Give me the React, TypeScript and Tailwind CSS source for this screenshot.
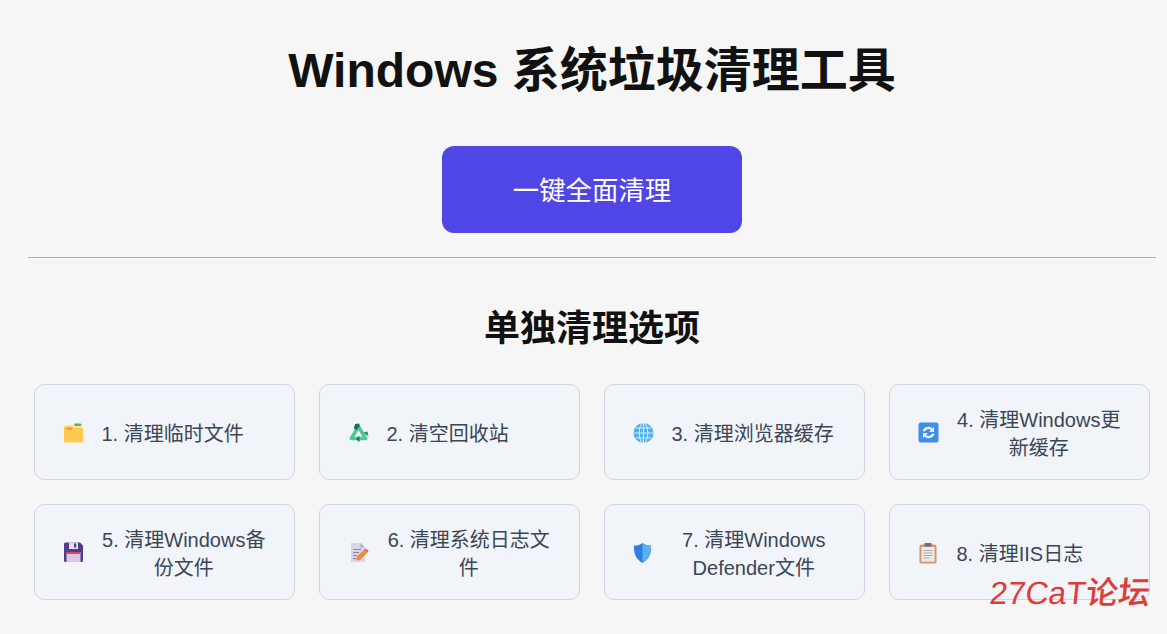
import React from 'react';

const FolderIcon = () => (
  <svg width="22" height="22" viewBox="0 0 22 22">
    <path d="M2 4 A2 2 0 0 1 4 2 H18 A2 2 0 0 1 20 4 V8 H2 Z" fill="#f5e9b8" />
    <rect x="12" y="1" width="7" height="2.6" rx="0.8" fill="#5fae5a" />
    <path d="M1 5 A1 1 0 0 1 2 4 H10 L11.5 5.5 H20 A1 1 0 0 1 21 6.5 V19 A2 2 0 0 1 19 21 H3 A2 2 0 0 1 1 19 Z" fill="#fdc94e" />
    <rect x="3.5" y="5.5" width="6" height="1.8" rx="0.5" fill="#ef8a4a" />
  </svg>
);

const RecycleIcon = () => (
  <svg width="22" height="22" viewBox="0 0 22 22">
    <path d="M11 4.5 L18.6 16.8 H3.4 Z" fill="none" stroke="#4cc997" strokeWidth="3.8" strokeLinejoin="round" />
    <path d="M7.5 1.5 L11.5 1 L12.5 3.5 L9 8 L6 6 Z" fill="#1f6f58" />
    <path d="M12 14 V20.6 L8.6 17.3 Z" fill="#1f6f58" />
    <path d="M16 10.5 L20.5 9.5 L21.4 14.5 Z" fill="#2a8f6e" />
  </svg>
);

const GlobeIcon = () => (
  <svg width="22" height="22" viewBox="0 0 22 22">
    <circle cx="11" cy="11" r="10.5" fill="#4fb0ea" />
    <g fill="none" stroke="#d3ecfa" strokeWidth="1.1">
      <ellipse cx="11" cy="11" rx="4.5" ry="10.5" />
      <path d="M11 1 V21 M1 11 H21 M3 5.8 H19 M3 16.2 H19" />
    </g>
  </svg>
);

const RefreshIcon = () => (
  <svg width="21" height="21" viewBox="0 0 21 21">
    <rect x="0.5" y="0.5" width="20" height="20" rx="2.5" fill="#3f8ee8" />
    <path d="M4.5 9 A6 6 0 0 1 14.5 6.5 L16 5 V10 H11 L13 8 A3.8 3.8 0 0 0 7 9.5 Z" fill="#eaf3fd" />
    <path d="M16.5 12 A6 6 0 0 1 6.5 14.5 L5 16 V11 H10 L8 13 A3.8 3.8 0 0 0 14 11.5 Z" fill="#eaf3fd" />
  </svg>
);

const FloppyIcon = () => (
  <svg width="21" height="21" viewBox="0 0 21 21">
    <path d="M1 2 A1.5 1.5 0 0 1 2.5 0.5 H17 L20 3.5 V18.5 A1.5 1.5 0 0 1 18.5 20 H2.5 A1.5 1.5 0 0 1 1 18.5 Z" fill="#4f3d8c" />
    <rect x="6" y="0.5" width="9" height="6.5" fill="#e3e0ec" />
    <rect x="11" y="1.5" width="2.2" height="4" fill="#4f3d8c" />
    <rect x="3.5" y="10" width="14" height="10" fill="#dcc6e8" />
    <rect x="3.5" y="10" width="14" height="2" fill="#d9455f" />
  </svg>
);

const NoteIcon = () => (
  <svg width="21" height="21" viewBox="0 0 21 21">
    <path d="M3 1 H12.5 L17 5.5 V20 H3 Z" fill="#d9d4e6" />
    <path d="M12.5 1 L17 5.5 H12.5 Z" fill="#b7afcc" />
    <path d="M5 7.5 H13 M5 10.5 H11 M5 13.5 H9 M5 16.5 H8" stroke="#a17fa0" strokeWidth="1.2" />
    <path d="M8 18.5 L9 14.5 L16.5 7.5 L19.5 10.5 L12 18 Z" fill="#f08a3c" />
    <path d="M16.5 7.5 L18 6.5 L20.5 9 L19.5 10.5 Z" fill="#e2574c" />
  </svg>
);

const ShieldIcon = () => (
  <svg width="21" height="22" viewBox="0 0 21 22">
    <path d="M9.5 1 C12 3 14.5 3.5 18 3.5 C18.5 11 16 17.5 9.5 21 C3 17.5 0.5 11 1 3.5 C4.5 3.5 7 3 9.5 1 Z" fill="#2f7fe0" />
    <path d="M9.5 1 C12 3 14.5 3.5 18 3.5 C18.5 11 16 17.5 9.5 21 Z" fill="#5cb0f5" />
  </svg>
);

const ClipboardIcon = () => (
  <svg width="21" height="22" viewBox="0 0 21 22">
    <rect x="1.5" y="2.5" width="17" height="19" rx="1.5" fill="#d09a78" />
    <rect x="3.5" y="5" width="13" height="14.5" fill="#f0ebe6" />
    <path d="M5.5 8.5 H14.5 M5.5 11 H14.5 M5.5 13.5 H14.5 M5.5 16 H11.5" stroke="#a9a6bd" strokeWidth="1.1" />
    <rect x="6.5" y="1" width="7" height="3.5" rx="0.8" fill="#7a6a6a" />
  </svg>
);

const options = [
  { id: 1, label: '1. 清理临时文件', icon: <FolderIcon /> },
  { id: 2, label: '2. 清空回收站', icon: <RecycleIcon /> },
  { id: 3, label: '3. 清理浏览器缓存', icon: <GlobeIcon /> },
  { id: 4, label: '4. 清理Windows更新缓存', icon: <RefreshIcon /> },
  { id: 5, label: '5. 清理Windows备份文件', icon: <FloppyIcon /> },
  { id: 6, label: '6. 清理系统日志文件', icon: <NoteIcon /> },
  { id: 7, label: '7. 清理Windows Defender文件', icon: <ShieldIcon /> },
  { id: 8, label: '8. 清理IIS日志', icon: <ClipboardIcon /> },
];

export default function App() {
  return (
    <div className="relative h-[634px] overflow-hidden bg-[#f6f6f7] font-['Liberation_Sans','Noto_Sans_CJK_SC',sans-serif]">
      <div className="ml-[28px] w-[1128px] pt-[37px] flex flex-col items-center">
        <h1 className="text-[48px] leading-[68px] font-bold text-[#111111]">Windows 系统垃圾清理工具</h1>

        <button className="mt-[41px] w-[300px] h-[87px] pt-[5px] rounded-[12px] bg-[#4f46e5] text-white text-[26.4px]">
          一键全面清理
        </button>

        <div className="mt-[24px] w-full h-px bg-[#9fb0e0]" />

        <h2 className="mt-[45px] mb-[29px] text-[36px] leading-[52px] font-bold text-[#111111]">单独清理选项</h2>

        <div className="w-full px-[6px] grid grid-cols-4 gap-[24px]">
          {options.map(opt => (
            <div
              key={opt.id}
              className="h-[96px] flex items-center gap-[17.5px] px-[28px] rounded-[10px] border border-[#cfd6e2] bg-[#f1f4f9] text-[20px] leading-[28px] text-[#3b4656]"
            >
              <span className="shrink-0 w-[21px] pt-[1px] flex justify-center">{opt.icon}</span>
              <span className="pt-[3px] text-center min-w-0">{opt.label}</span>
            </div>
          ))}
        </div>
      </div>

      {/* forum watermark */}
      <div className="absolute left-[990px] top-[574px] -skew-x-6 text-[32px] leading-[38px] font-medium text-[#e03a3a] whitespace-nowrap">
        27CaT论坛
      </div>
    </div>
  );
}
